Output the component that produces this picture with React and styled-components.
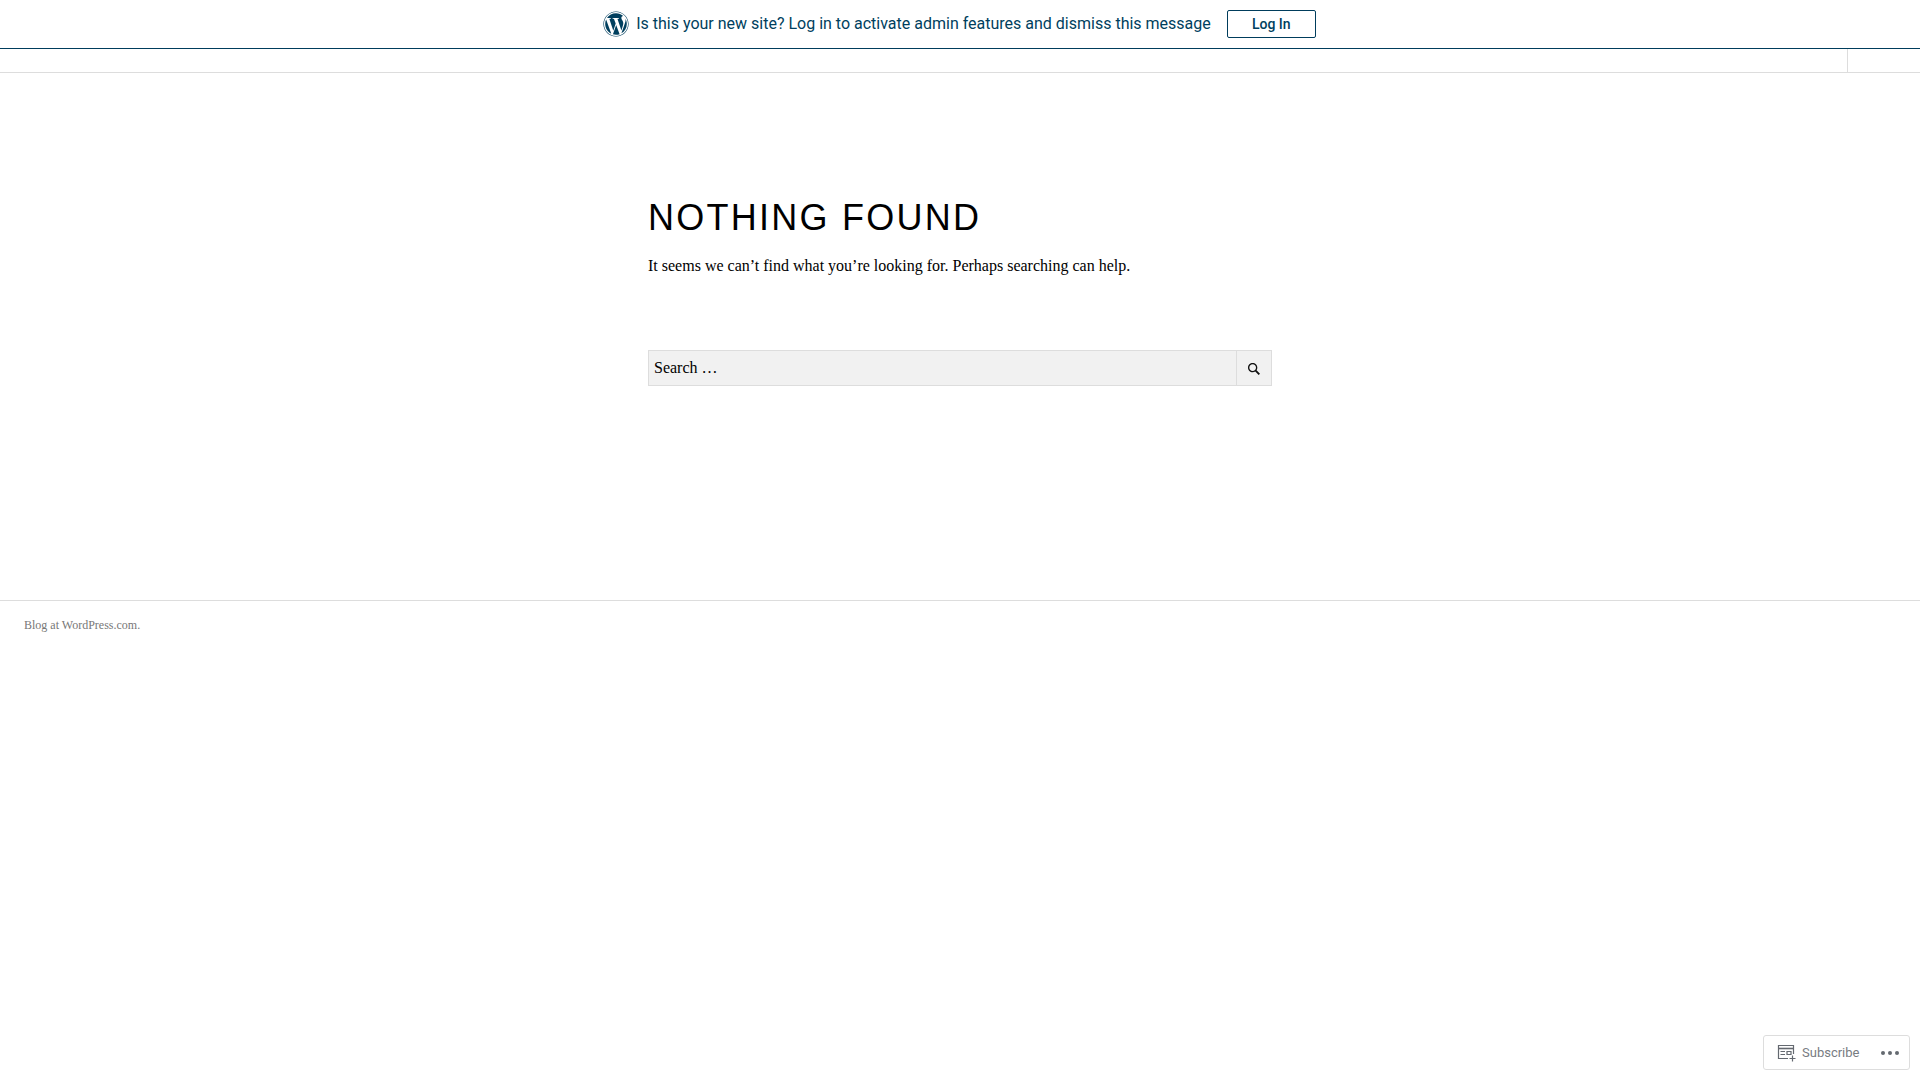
import React from "react"
import styled, { createGlobalStyle } from "styled-components"
import { FaWordpress } from "react-icons/fa"

const GlobalStyle = createGlobalStyle`
  html, body {
    margin: 0;
    padding: 0;
    background: #fff;
  }
  body {
    font-family: "Liberation Serif", serif;
    color: #000;
  }
`

const Notice = styled.div`
  display: flex;
  align-items: center;
  justify-content: center;
  height: 49px;
  box-sizing: border-box;
  border-bottom: 1px solid #003d5c;
  color: #003f5e;
  font-family: Roboto, sans-serif;
  font-size: 16px;
`
const NoticeLogo = styled(FaWordpress)`
  width: 26px;
  height: 26px;
  margin-right: 7px;
  margin-left: -1px;
`
const NoticeText = styled.span`
  padding-bottom: 1px;
`
const LogIn = styled.a`
  display: flex;
  align-items: center;
  justify-content: center;
  width: 89px;
  height: 28px;
  box-sizing: border-box;
  margin-left: 16px;
  border: 1px solid #003d5c;
  border-radius: 2px;
  font-size: 14px;
  font-weight: 500;
`
const NavBar = styled.div`
  display: flex;
  justify-content: flex-end;
  height: 23px;
  border-bottom: 1px solid #ddd;
`
const NavCell = styled.div`
  width: 72px;
  border-left: 1px solid #ddd;
`
const Main = styled.main`
  width: 624px;
  height: 527px;
  margin: 0 auto;
  padding-top: 123px;
  box-sizing: border-box;
`
const Title = styled.h1`
  margin: 0;
  font-family: "Liberation Sans", sans-serif;
  font-size: 36px;
  font-weight: 400;
  line-height: 44px;
  letter-spacing: 2.25px;
  text-transform: uppercase;
`
const Lead = styled.p`
  margin: 14px 0 0;
  font-size: 16px;
  line-height: 24px;
`
const SearchForm = styled.form`
  display: flex;
  height: 36px;
  margin-top: 72px;
  box-sizing: border-box;
  border: 1px solid #ddd;
  background: #f1f1f1;
`
const SearchField = styled.div`
  flex: 1;
  padding-left: 5px;
  font-size: 16px;
  line-height: 34px;
`
const SearchButton = styled.div`
  display: flex;
  align-items: center;
  justify-content: center;
  width: 34px;
  padding-top: 1px;
  border-left: 1px solid #ddd;
`
const Footer = styled.footer`
  border-top: 1px solid #ddd;
  padding: 16px 24px;
  color: #777;
  font-size: 12px;
  line-height: 16px;
`
const Subscribe = styled.div`
  position: fixed;
  right: 10px;
  bottom: 10px;
  display: flex;
  align-items: center;
  width: 147px;
  height: 35px;
  box-sizing: border-box;
  padding-left: 13px;
  border: 1px solid #ddd;
  border-radius: 3px;
  background: #fff;
  color: #787c82;
  font-family: Roboto, sans-serif;
  font-size: 13px;
`
const SubscribeIcon = styled.svg`
  width: 20px;
  height: 20px;
  margin-right: 5px;
  fill: none;
  stroke: #646970;
  stroke-width: 1.2;
`
const Dots = styled.div`
  display: flex;
  gap: 3px;
  margin-left: 22px;
`
const Dot = styled.span`
  width: 4px;
  height: 4px;
  border-radius: 50%;
  background: #646970;
`

const App = () => (
  <>
    <GlobalStyle />
    <Notice>
      <NoticeLogo />
      <NoticeText>Is this your new site? Log in to activate admin features and dismiss this message</NoticeText>
      <LogIn>Log In</LogIn>
    </Notice>
    <NavBar>
      <NavCell />
    </NavBar>
    <Main>
      <Title>Nothing Found</Title>
      <Lead>It seems we can’t find what you’re looking for. Perhaps searching can help.</Lead>
      <SearchForm>
        <SearchField>Search …</SearchField>
        <SearchButton>
          <svg width="16" height="16" viewBox="0 0 24 24" fill="#111">
            <path d="M21 19l-5.154-5.154C16.574 12.742 17 11.42 17 10c0-3.866-3.134-7-7-7s-7 3.134-7 7 3.134 7 7 7c1.42 0 2.742-.426 3.846-1.154L19 21l2-2zM5 10c0-2.757 2.243-5 5-5s5 2.243 5 5-2.243 5-5 5-5-2.243-5-5z" />
          </svg>
        </SearchButton>
      </SearchForm>
    </Main>
    <Footer>Blog at WordPress.com.</Footer>
    <Subscribe>
      <SubscribeIcon viewBox="0 0 20 20">
        <path d="M11 15.5H1.5V2.5H16.5V11" />
        <path d="M1.5 5.5H16.5" strokeWidth="1.6" />
        <path d="M3.5 8.5H8M3.5 11.5H8" />
        <path d="M10 8.5H14V11.5H10Z" />
        <path d="M15.5 12.5V18.5M12.5 15.5H18.5" />
      </SubscribeIcon>
      <span>Subscribe</span>
      <Dots>
        <Dot />
        <Dot />
        <Dot />
      </Dots>
    </Subscribe>
  </>
)

export default App
